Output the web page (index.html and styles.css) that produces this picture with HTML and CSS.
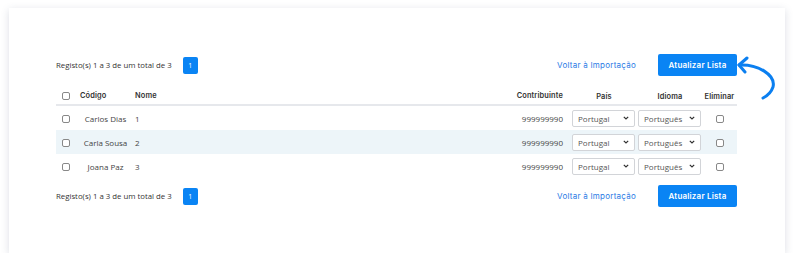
FILE: index.html
```html
<!DOCTYPE html>
<html lang="pt">
<head>
  <meta charset="UTF-8">
  <meta name="viewport" content="width=device-width, initial-scale=1.0">
  <title>Importação de Clientes</title>
  <link rel="stylesheet" href="styles.css">
</head>
<body>
  <div class="card">
    <div class="toolbar">
      <div class="pager">
        <span class="pager-info">Registo(s) 1 a 3 de um total de 3</span>
        <button class="page-button">1</button>
      </div>
      <div class="actions">
        <a class="back-link" href="#">Voltar à Importação</a>
        <button class="update-button">Atualizar Lista</button>
      </div>
    </div>

    <svg class="hint-arrow" width="44" height="46" viewBox="0 0 44 46">
      <path d="M3 9 C 22 8, 40 19, 37 31 C 35 37, 31 40, 27 42" fill="none" stroke="#0b7ff0" stroke-width="3" stroke-linecap="round"/>
      <path d="M11 2 L 3 9 L 9 16" fill="none" stroke="#0b7ff0" stroke-width="3" stroke-linecap="round" stroke-linejoin="round"/>
    </svg>

    <table class="clients">
      <thead>
        <tr>
          <th class="col-check"><input type="checkbox"></th>
          <th class="col-code">Código</th>
          <th class="col-name">Nome</th>
          <th class="col-nif">Contribuinte</th>
          <th class="col-country">País</th>
          <th class="col-lang">Idioma</th>
          <th class="col-delete">Eliminar</th>
        </tr>
      </thead>
      <tbody>
        <tr>
          <td class="col-check"><input type="checkbox"></td>
          <td class="col-code">Carlos Dias</td>
          <td class="col-name">1</td>
          <td class="col-nif">999999990</td>
          <td class="col-country"><select><option>Portugal</option></select></td>
          <td class="col-lang"><select><option>Português</option></select></td>
          <td class="col-delete"><input type="checkbox"></td>
        </tr>
        <tr class="striped">
          <td class="col-check"><input type="checkbox"></td>
          <td class="col-code">Carla Sousa</td>
          <td class="col-name">2</td>
          <td class="col-nif">999999990</td>
          <td class="col-country"><select><option>Portugal</option></select></td>
          <td class="col-lang"><select><option>Português</option></select></td>
          <td class="col-delete"><input type="checkbox"></td>
        </tr>
        <tr>
          <td class="col-check"><input type="checkbox"></td>
          <td class="col-code">Joana Paz</td>
          <td class="col-name">3</td>
          <td class="col-nif">999999990</td>
          <td class="col-country"><select><option>Portugal</option></select></td>
          <td class="col-lang"><select><option>Português</option></select></td>
          <td class="col-delete"><input type="checkbox"></td>
        </tr>
      </tbody>
    </table>

    <div class="toolbar toolbar-bottom">
      <div class="pager">
        <span class="pager-info">Registo(s) 1 a 3 de um total de 3</span>
        <button class="page-button">1</button>
      </div>
      <div class="actions">
        <a class="back-link" href="#">Voltar à Importação</a>
        <button class="update-button">Atualizar Lista</button>
      </div>
    </div>
  </div>
</body>
</html>
```

FILE: styles.css
```css
body {
  margin: 0;
  background-color: #ffffff;
  font-family: "Open Sans", Arial, sans-serif;
  color: #444;
}
.card {
  position: relative;
  width: 776px;
  height: 245px;
  margin: 8px 0 0 9px;
  padding: 46px 48px 0 47px;
  box-sizing: border-box;
  background-color: #fff;
  box-shadow: 0 2px 8px rgba(60, 70, 110, 0.18);
}
.toolbar {
  display: flex;
  justify-content: space-between;
  align-items: center;
  height: 22px;
}
.toolbar-bottom {
  margin-top: 7px;
}
.pager {
  display: flex;
  align-items: center;
}
.pager-info {
  font-size: 7.8px;
  color: #333;
}
.page-button {
  margin-left: 11px;
  width: 15px;
  height: 17px;
  padding: 0;
  border: none;
  border-radius: 2px;
  background-color: #0a84f4;
  color: #fff;
  font-family: "Open Sans", Arial, sans-serif;
  font-size: 7px;
}
.actions {
  display: flex;
  align-items: center;
}
.back-link {
  font-family: Inter, "Open Sans", sans-serif;
  font-size: 8px;
  letter-spacing: 0.25px;
  color: #2c7be5;
  text-decoration: none;
}
.update-button {
  margin-left: 22px;
  width: 79px;
  height: 22px;
  padding: 0;
  border: none;
  border-radius: 2px;
  background-color: #0a84f4;
  color: #fff;
  font-family: Inter, "Open Sans", sans-serif;
  font-size: 8px;
  font-weight: 600;
  letter-spacing: 0.2px;
}
.hint-arrow {
  position: absolute;
  left: 727px;
  top: 48px;
}
.clients {
  width: 681px;
  margin-top: 12px;
  border-collapse: collapse;
  table-layout: fixed;
}
.clients th {
  height: 15px;
  padding: 0 4px 1px;
  font-family: Inter, "Open Sans", sans-serif;
  font-size: 7.4px;
  font-weight: 600;
  letter-spacing: 0.15px;
  color: #333;
  text-align: left;
  border-bottom: 2px solid #e6e8ec;
}
.clients td {
  height: 24px;
  padding: 0 4px;
  font-size: 8px;
  color: #444;
}
.clients tr.striped td {
  background-color: #edf5f9;
}
.clients .col-check {
  width: 12px;
  text-align: center;
}
.clients .col-code {
  width: 47px;
}
.clients td.col-code {
  text-align: center;
  padding-left: 6px;
  padding-right: 2px;
}
.clients .col-nif {
  width: 84px;
  text-align: right;
  padding-right: 6px;
}
.clients .col-country {
  width: 64px;
  padding: 0 0 0 3px;
  text-align: center;
}
.clients .col-lang {
  width: 64px;
  padding: 0 0 0 2px;
  text-align: center;
}
.clients .col-delete {
  width: 35px;
  padding: 0;
  text-align: center;
}
.clients th.col-nif {
  text-align: right;
}
input[type="checkbox"] {
  appearance: none;
  width: 8px;
  height: 8px;
  margin: 0;
  border: 1px solid #888;
  border-radius: 2px;
  background-color: #fff;
  vertical-align: middle;
}
.clients select {
  appearance: none;
  display: block;
  width: 63px;
  height: 17px;
  padding: 0 0 0 5px;
  border: 1px solid #d2d4d8;
  border-radius: 2px;
  background-color: #fff;
  background-image: url("data:image/svg+xml,%3Csvg xmlns='http://www.w3.org/2000/svg' width='6' height='4' viewBox='0 0 6 4'%3E%3Cpath d='M0.8 0.8 L3 3 L5.2 0.8' fill='none' stroke='%23333' stroke-width='1.2'/%3E%3C/svg%3E");
  background-repeat: no-repeat;
  background-position: right 5px center;
  font-family: "Open Sans", Arial, sans-serif;
  font-size: 8px;
  color: #555;
}
```
